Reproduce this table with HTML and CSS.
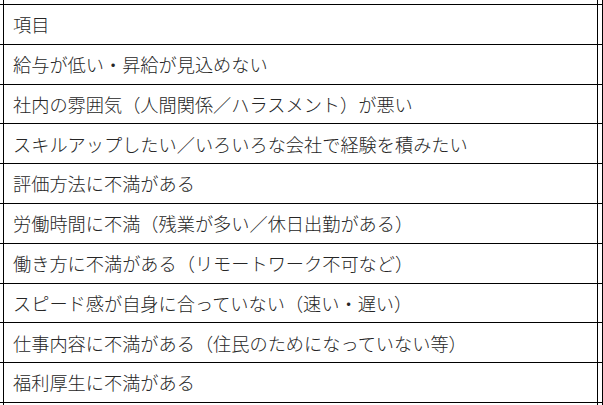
FILE: index.html
```html
<!DOCTYPE html>
<html lang="ja">
<head>
<meta charset="utf-8">
<link rel="stylesheet" href="styles.css">
</head>
<body>
<div class="sheet">
  <div class="row top"><div class="gutter"></div><div class="cell"></div><div class="next"></div></div>
  <div class="row"><div class="gutter"></div><div class="cell">項目</div><div class="next"></div></div>
  <div class="row"><div class="gutter"></div><div class="cell">給与が低い・昇給が見込めない</div><div class="next"></div></div>
  <div class="row"><div class="gutter"></div><div class="cell">社内の雰囲気（人間関係／ハラスメント）が悪い</div><div class="next"></div></div>
  <div class="row"><div class="gutter"></div><div class="cell">スキルアップしたい／いろいろな会社で経験を積みたい</div><div class="next"></div></div>
  <div class="row"><div class="gutter"></div><div class="cell">評価方法に不満がある</div><div class="next"></div></div>
  <div class="row"><div class="gutter"></div><div class="cell">労働時間に不満（残業が多い／休日出勤がある）</div><div class="next"></div></div>
  <div class="row"><div class="gutter"></div><div class="cell">働き方に不満がある（リモートワーク不可など）</div><div class="next"></div></div>
  <div class="row"><div class="gutter"></div><div class="cell">スピード感が自身に合っていない（速い・遅い）</div><div class="next"></div></div>
  <div class="row"><div class="gutter"></div><div class="cell">仕事内容に不満がある（住民のためになっていない等）</div><div class="next"></div></div>
  <div class="row"><div class="gutter"></div><div class="cell">福利厚生に不満がある</div><div class="next"></div></div>
  <div class="row tail"><div class="gutter"></div><div class="cell"></div><div class="next"></div></div>
</div>
</body>
</html>
```
FILE: styles.css
```css
html, body {
  margin: 0;
  padding: 0;
  background: #ffffff;
}
body {
  width: 603px;
  height: 405px;
  overflow: hidden;
  font-family: "Noto Sans CJK JP", "Noto Sans", sans-serif;
  font-weight: 300;
  color: #262626;
}
.sheet {
  display: flex;
  flex-direction: column;
}
.row {
  display: flex;
  height: 39.8px;
  border-bottom: 1px solid #000;
  box-sizing: border-box;
}
.row.top {
  height: 5px;
}
.row.tail {
  border-bottom: none;
  height: 10px;
}
.gutter {
  width: 3px;
  flex: none;
}
.cell {
  width: 595px;
  flex: none;
  border-left: 1px solid #000;
  border-right: 1px solid #000;
  box-sizing: border-box;
  padding-left: 9px;
  font-size: 18.2px;
  line-height: 1;
  display: flex;
  align-items: center;
  white-space: nowrap;
}
.next {
  flex: 1;
  border-right: 1px solid #000;
}
```
